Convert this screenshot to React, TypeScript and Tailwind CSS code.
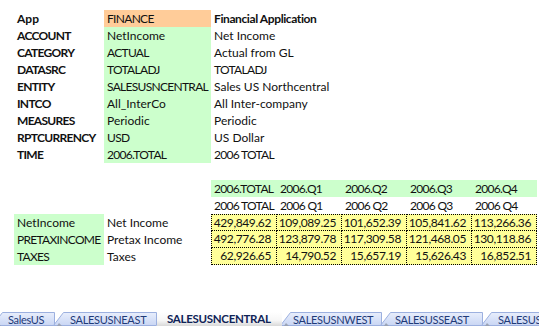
import React from "react";

const top = [
  ["App", "FINANCE", "Financial Application"],
  ["ACCOUNT", "NetIncome", "Net Income"],
  ["CATEGORY", "ACTUAL", "Actual from GL"],
  ["DATASRC", "TOTALADJ", "TOTALADJ"],
  ["ENTITY", "SALESUSNCENTRAL", "Sales US Northcentral"],
  ["INTCO", "All_InterCo", "All Inter-company"],
  ["MEASURES", "Periodic", "Periodic"],
  ["RPTCURRENCY", "USD", "US Dollar"],
  ["TIME", "2006.TOTAL", "2006 TOTAL"],
];

const hdr1 = ["2006.TOTAL", "2006.Q1", "2006.Q2", "2006.Q3", "2006.Q4"];
const hdr2 = ["2006 TOTAL", "2006 Q1", "2006 Q2", "2006 Q3", "2006 Q4"];
const colW = ["w-[66px]", "w-[65px]", "w-[65px]", "w-[65px]", "w-[65px]"];

const data = [
  ["NetIncome", "Net Income", ["429,849.62", "109,089.25", "101,652.39", "105,841.62", "113,266.36"]],
  ["PRETAXINCOME", "Pretax Income", ["492,776.28", "123,879.78", "117,309.58", "121,468.05", "130,118.86"]],
  ["TAXES", "Taxes", ["62,926.65", "14,790.52", "15,657.19", "15,626.43", "16,852.51"]],
] as const;

function trk(s: string) {
  if (/[a-z]/.test(s)) return "";
  if (/[A-Z]/.test(s)) return "tracking-[-0.7px]";
  return "tracking-[-0.4px]";
}

function C({ s, className = "" }: { s: string; className?: string }) {
  return <span className={"whitespace-nowrap " + trk(s) + " " + className}>{s}</span>;
}

function Tab({ label, w, active, first, pl }: { label: string; w: number; active?: boolean; first?: boolean; pl: string }) {
  const id = active ? "ga" : "gi";
  return (
    <div
      className={
        "relative h-[14px] shrink-0 flex items-center " +
        (first ? "-ml-[8px] " : "-ml-[2px] ") +
        (active ? "z-10" : "")
      }
      style={{ width: w }}
    >
      <svg className="absolute inset-0" width={w} height={14}>
        <defs>
          <linearGradient id="gi" x1="0" y1="0" x2="0" y2="1">
            <stop offset="0" stopColor="#e8eefc" />
            <stop offset="1" stopColor="#c9d6f4" />
          </linearGradient>
          <linearGradient id="ga" x1="0" y1="0" x2="0" y2="1">
            <stop offset="0" stopColor="#ffffff" />
            <stop offset="0.6" stopColor="#f6f6f6" />
            <stop offset="1" stopColor="#d9d9d9" />
          </linearGradient>
        </defs>
        {active ? (
          <polygon points={`2,14 2,0 ${w},0 ${w},14`} fill={`url(#${id})`} />
        ) : (
          <>
            <polygon points={`0.5,13.5 10.5,0.5 ${w - 0.5},0.5 ${w - 0.5},13.5`} fill={`url(#${id})`} stroke="#9cb0df" strokeWidth="1" />
            <polygon points="4,14 9,14 6,11" fill="#9aa3b5" />
          </>
        )}
      </svg>
      <span
        className={
          "relative whitespace-nowrap leading-none " +
          pl +
          (active
            ? " font-bold text-[11.5px] tracking-[-0.3px] text-[#0f2357]"
            : " text-[11px] tracking-[-0.3px] text-[#1f3a78]")
        }
      >
        {label}
      </span>
    </div>
  );
}

export default function App() {
  return (
    <div className="w-[539px] h-[335px] bg-white overflow-hidden flex flex-col font-['Lato',sans-serif] text-[12px] text-[#111]">
      <div className="pt-[10px] pl-[14px] flex-1">
        {top.map((r, i) => (
          <div key={i} className="flex h-[17px] items-center">
            <div className="w-[90px] pl-[3px] font-bold">
              <C s={r[0]} />
            </div>
            <div className={"w-[107px] h-full flex items-center pl-[3px] " + (i === 0 ? "bg-[#ffcc99]" : "bg-[#ccffcc]")}>
              <C s={r[1]} />
            </div>
            <div className={"pl-[3px] " + (i === 0 ? "font-bold tracking-[-0.4px]" : "")}>
              <C s={r[2]} />
            </div>
          </div>
        ))}
        <div className="h-[17px]" />
        <div className="flex h-[17px]">
          <div className="w-[197px]" />
          <div className="flex bg-[#ccffcc]">
            {hdr1.map((h, i) => (
              <div key={i} className={colW[i] + " pl-[3px] flex items-center"}>
                <C s={h} />
              </div>
            ))}
          </div>
        </div>
        <div className="flex h-[17px]">
          <div className="w-[197px]" />
          {hdr2.map((h, i) => (
            <div key={i} className={colW[i] + " pl-[3px] flex items-center"}>
              <C s={h} />
            </div>
          ))}
        </div>
        {data.map((r, ri) => (
          <div key={ri} className="flex h-[17px]">
            <div className="w-[90px] pl-[3px] bg-[#ccffcc] flex items-center">
              <C s={r[0]} />
            </div>
            <div className="w-[107px] pl-[3px] flex items-center">
              <C s={r[1]} />
            </div>
            {r[2].map((v, ci) => (
              <div
                key={ci}
                className={
                  colW[ci] +
                  " bg-[#ffff99] flex items-center justify-end pr-[5px] border-dotted border-black border-r border-b " +
                  (ci === 0 ? "border-l " : "") +
                  (ri === 0 ? "border-t" : "")
                }
              >
                <C s={v} />
              </div>
            ))}
          </div>
        ))}
      </div>
      <div className="h-[23px] flex flex-col">
        <div className="flex h-[14px]">
          <Tab label="SalesUS" w={63} first pl="pl-[16px]" />
          <Tab label="SALESUSNEAST" w={104} pl="pl-[17px]" />
          <Tab label="SALESUSNCENTRAL" w={127} active pl="pl-[12px]" />
          <Tab label="SALESUSNWEST" w={102} pl="pl-[13px]" />
          <Tab label="SALESUSSEAST" w={103} pl="pl-[15px]" />
          <Tab label="SALESUS" w={70} pl="pl-[17px]" />
        </div>
        <div className="flex-1 bg-white" />
      </div>
    </div>
  );
}
